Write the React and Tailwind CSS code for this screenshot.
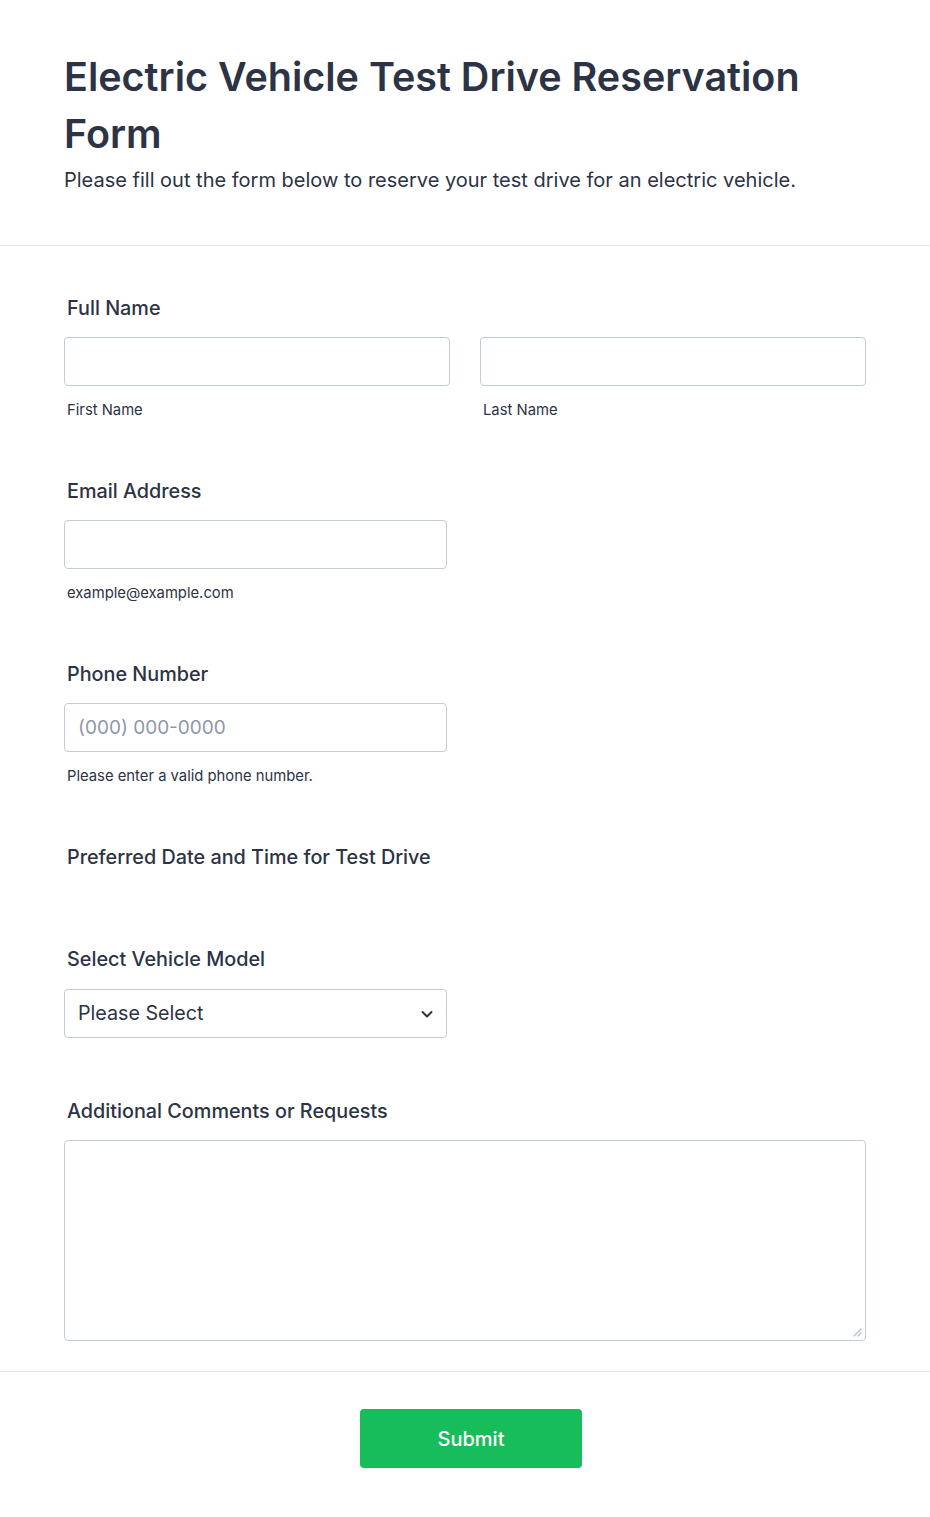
const labelCls = "block text-[19.8px] leading-6 font-medium text-[#2c3345]";
const subCls = "block text-[14.8px] leading-5 text-[#2c3345]";
const inputCls =
  "block h-[49px] w-full rounded-[4px] border border-[#c3cad8] bg-white px-[13px] text-[19px] text-[#2c3345] outline-none placeholder:text-[#8d97ab]";

const Field = ({ label, children, className = "" }) => (
  <div className={className}>
    <label className={`${labelCls} pl-[3px]`}>{label}</label>
    {children}
  </div>
);

export default function App() {
  return (
    <div
      className="min-h-[1517px] bg-white text-[#2c3345]"
      style={{ fontFamily: "Inter, 'Noto Sans', sans-serif" }}
    >
      <header className="border-b border-[#e3e5ec] px-[64px] pt-[49px] pb-[53px]">
        <h1 className="text-[39.5px] font-semibold leading-[57px] text-[#2c3345]">
          Electric Vehicle Test Drive Reservation Form
        </h1>
        <p className="mt-[5px] text-[20px] leading-6 text-[#2c3345]">
          Please fill out the form below to reserve your test drive for an electric vehicle.
        </p>
      </header>

      <form className="px-[64px] pt-[50px]" onSubmit={(e) => e.preventDefault()}>
        <Field label="Full Name">
          <div className="mt-[17px] grid grid-cols-2 gap-[30px]">
            <div>
              <input className={inputCls} />
              <span className={`${subCls} mt-[14px] pl-[3px]`}>First Name</span>
            </div>
            <div>
              <input className={inputCls} />
              <span className={`${subCls} mt-[14px] pl-[3px]`}>Last Name</span>
            </div>
          </div>
        </Field>

        <Field label="Email Address" className="mt-[59px]">
          <div className="mt-[17px] w-[383px]">
            <input className={inputCls} />
            <span className={`${subCls} mt-[14px] pl-[3px]`}>example@example.com</span>
          </div>
        </Field>

        <Field label="Phone Number" className="mt-[59px]">
          <div className="mt-[17px] w-[383px]">
            <input className={inputCls} placeholder="(000) 000-0000" />
            <span className={`${subCls} mt-[14px] pl-[3px]`}>Please enter a valid phone number.</span>
          </div>
        </Field>

        <Field label="Preferred Date and Time for Test Drive" className="mt-[59px]" />

        <Field label="Select Vehicle Model" className="mt-[78px]">
          <div className="mt-[18px] flex h-[49px] w-[383px] items-center justify-between rounded-[4px] border border-[#c3cad8] bg-white pl-[13px] pr-[12px]">
            <span className="text-[19.7px] text-[#2c3345]">Please Select</span>
            <svg width="14" height="14" viewBox="0 0 14 14" fill="none">
              <path d="M2.5 5L7 9.5L11.5 5" stroke="#2c3345" strokeWidth="2" strokeLinecap="round" strokeLinejoin="round" />
            </svg>
          </div>
        </Field>

        <Field label="Additional Comments or Requests" className="mt-[61px]">
          <div className="relative mt-[17px]">
            <textarea className="block h-[201px] w-full resize-none rounded-[4px] border border-[#c3cad8] bg-white p-[12px] text-[19px] outline-none" />
            <svg className="absolute bottom-[4px] right-[4px]" width="10" height="10" viewBox="0 0 10 10">
              <path d="M9 2L2 9M9 6L6 9" stroke="#b5bccb" strokeWidth="1.2" strokeLinecap="round" />
            </svg>
          </div>
        </Field>
      </form>

      <div className="mt-[30px] flex justify-center border-t border-[#e3e5ec] pl-[12px] pt-[37px]">
        <button className="h-[59px] w-[222px] rounded-[4px] bg-[#18bd5b] text-[20px] font-medium text-white">
          Submit
        </button>
      </div>
    </div>
  );
}
